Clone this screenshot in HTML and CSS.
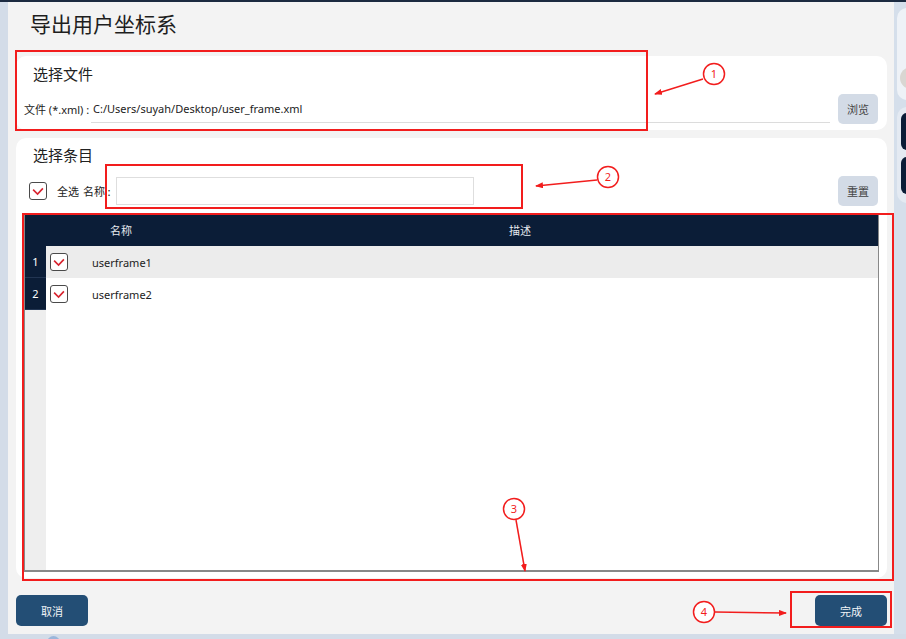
FILE: index.html
```html
<!DOCTYPE html>
<html lang="zh-CN">
<head>
  <meta charset="UTF-8" />
  <meta name="viewport" content="width=device-width, initial-scale=1.0" />
  <title>导出用户坐标系</title>
  <link rel="stylesheet" href="styles.css">
</head>
<body>
  <div class="topline"></div>
  <div class="screen">
    <div class="side-left"></div>

    <main class="dialog">
      <h1 class="title">导出用户坐标系</h1>

      <section class="card card-file">
        <h2 class="card-title">选择文件</h2>
        <div class="file-row">
          <span class="field-label">文件 (*.xml) :</span>
          <div class="path-field">C:/Users/suyah/Desktop/user_frame.xml</div>
          <button class="btn-light">浏览</button>
        </div>
      </section>

      <section class="card card-items">
        <h2 class="card-title">选择条目</h2>
        <div class="filter-row">
          <span class="check check-all">
            <svg viewBox="0 0 18 18"><path d="M3.5 7.5 L8.5 12.5 L14.5 6" /></svg>
          </span>
          <span class="filter-text select-all">全选</span>
          <span class="filter-text">名称 :</span>
          <input class="name-input" type="text">
          <span class="spacer"></span>
          <button class="btn-light">重置</button>
        </div>

        <div class="table">
          <div class="thead">
            <span></span>
            <span>名称</span>
            <span>描述</span>
            <span></span>
          </div>
          <div class="tbody">
            <div class="row row-alt">
              <span class="num">1</span>
              <div class="cell">
                <span class="check">
                  <svg viewBox="0 0 18 18"><path d="M3.5 7.5 L8.5 12.5 L14.5 6" /></svg>
                </span>
                <span class="item-name">userframe1</span>
              </div>
            </div>
            <div class="row">
              <span class="num">2</span>
              <div class="cell">
                <span class="check">
                  <svg viewBox="0 0 18 18"><path d="M3.5 7.5 L8.5 12.5 L14.5 6" /></svg>
                </span>
                <span class="item-name">userframe2</span>
              </div>
            </div>
            <div class="filler">
              <span class="num-empty"></span>
              <span></span>
            </div>
          </div>
        </div>
      </section>

      <footer class="actions">
        <button class="btn-dark">取消</button>
        <button class="btn-dark">完成</button>
      </footer>
    </main>

    <aside class="side-right">
      <div class="peek-card">
        <span class="peek-dot"></span>
      </div>
      <div class="peek-card peek-card-2">
        <span class="peek-block"></span>
        <span class="peek-block"></span>
      </div>
    </aside>
  </div>
  <div class="bottom-strip"><span class="bottom-dot"></span></div>

  <!-- annotation marks drawn over the screenshot -->
  <svg class="marks" width="906" height="639" viewBox="0 0 906 639">
    <defs>
      <marker id="head" markerWidth="8" markerHeight="6" refX="7" refY="3" orient="auto" markerUnits="userSpaceOnUse">
        <path d="M0 0 L8 3 L0 6 Z" fill="#f21d1d" />
      </marker>
    </defs>
    <g fill="none" stroke="#f21d1d" stroke-width="2">
      <rect x="16" y="51" width="631" height="79" />
      <rect x="106" y="165" width="416" height="43" />
      <rect x="23" y="214" width="870" height="366" />
      <rect x="791" y="592" width="100" height="35" />
    </g>
    <g fill="#fff" stroke="#f21d1d" stroke-width="1.5">
      <circle cx="714" cy="74" r="10.5" />
      <circle cx="608" cy="177" r="10.5" />
      <circle cx="514" cy="509" r="10.5" />
      <circle cx="704" cy="612" r="10.5" />
    </g>
    <g stroke="#f21d1d" stroke-width="1.5" marker-end="url(#head)">
      <line x1="703" y1="79" x2="655" y2="94" />
      <line x1="597" y1="180" x2="536" y2="186" />
      <line x1="516" y1="520" x2="525" y2="571" />
      <line x1="715" y1="612" x2="786" y2="613" />
    </g>
    <g class="mark-num" fill="#f21d1d" text-anchor="middle">
      <text x="714" y="78">1</text>
      <text x="608" y="181">2</text>
      <text x="514" y="513">3</text>
      <text x="704" y="616">4</text>
    </g>
  </svg>
</body>
</html>
```

FILE: styles.css
```css
* {
  box-sizing: border-box;
}
body {
  margin: 0;
  width: 906px;
  height: 639px;
  overflow: hidden;
  position: relative;
  background: #d5dfeb;
  font-family: "Noto Sans", "Noto Sans CJK SC", sans-serif;
  color: #222;
}
.topline {
  height: 2px;
  background: #1b2a40;
}
.screen {
  display: flex;
  height: 632px;
}
.side-left {
  width: 8px;
  background: #d3dce8;
}
.dialog {
  width: 886px;
  background: #f3f3f3;
  padding: 0 7px 0 8px;
  display: flex;
  flex-direction: column;
}
.title {
  margin: 0;
  padding-top: 8px;
  padding-left: 14px;
  font-size: 21px;
  line-height: 28px;
  font-weight: normal;
  color: #1e1e1e;
  height: 54px;
}
.card {
  background: #fff;
  border-radius: 10px;
  padding: 0 9px 6px 8px;
}
.card-title {
  margin: 7px 0 0 9px;
  font-size: 15px;
  line-height: 22px;
  font-weight: normal;
  color: #222;
}
.card-file {
  height: 74px;
}
.file-row {
  display: flex;
  align-items: flex-end;
  margin-top: 9px;
  height: 30px;
}
.field-label {
  flex: 0 0 67px;
  white-space: nowrap;
  font-size: 11px;
  line-height: 26px;
  margin-bottom: 1px;
  color: #222;
}
.path-field {
  flex: 1;
  height: 27px;
  line-height: 26px;
  margin-bottom: 1px;
  padding-left: 2px;
  font-size: 11px;
  color: #222;
  border-bottom: 1px solid #dcdcdc;
}
.btn-light {
  width: 40px;
  height: 30px;
  margin-left: 8px;
  border: none;
  border-radius: 5px;
  background: #d3dbe6;
  color: #444;
  font-family: "Noto Sans CJK SC", sans-serif;
  font-size: 11px;
  padding: 0;
}
.card-items {
  margin-top: 8px;
  height: 440px;
}
.card-items .card-title {
  margin-top: 6px;
}
.filter-row {
  display: flex;
  align-items: center;
  margin-top: 10px;
  height: 30px;
}
.check {
  width: 18px;
  height: 18px;
  border: 1.5px solid #4a4a4a;
  border-radius: 3px;
  background: #fff;
  display: flex;
}
.check svg {
  width: 100%;
  height: 100%;
  fill: none;
  stroke: #d8242f;
  stroke-width: 1.8;
}
.check-all {
  margin-left: 5px;
}
.filter-text {
  font-family: "Noto Sans CJK SC", sans-serif;
  font-size: 11px;
  color: #222;
  white-space: pre;
}
.select-all {
  margin: 0 4px 0 10px;
}
.name-input {
  width: 358px;
  height: 28px;
  border: 1px solid #dedede;
  background: #fff;
  margin: 0 0 0 5px;
  flex-shrink: 0;
}
.spacer {
  flex: 1;
}
.table {
  margin-top: 7px;
  margin-right: -1px;
  height: 359px;
  border: 1px solid #888;
  border-bottom-width: 2px;
  display: flex;
  flex-direction: column;
}
.thead {
  display: grid;
  grid-template-columns: 21px 150px 648px 1fr;
  height: 32px;
  background: #0b1d37;
  color: #e6e9ee;
  font-family: "Noto Sans CJK SC", sans-serif;
  font-size: 11px;
  line-height: 32px;
  text-align: center;
}
.tbody {
  flex: 1;
  display: flex;
  flex-direction: column;
}
.row {
  display: grid;
  grid-template-columns: 21px 1fr;
  height: 32px;
  background: #fff;
}
.row-alt {
  background: #ececec;
}
.num {
  background: #0b1d37;
  color: #fff;
  font-size: 11px;
  line-height: 31px;
  text-align: center;
  border-bottom: 1px solid #223552;
}
.cell {
  display: flex;
  align-items: center;
  padding-left: 4px;
}
.item-name {
  margin-left: 24px;
  font-size: 11px;
  color: #222;
}
.filler {
  flex: 1;
  display: grid;
  grid-template-columns: 21px 1fr;
}
.num-empty {
  background: #eeeeee;
}
.actions {
  display: flex;
  justify-content: space-between;
  margin-top: 17px;
}
.btn-dark {
  width: 72px;
  height: 31px;
  border: none;
  border-radius: 5px;
  background: #234e75;
  color: #f2f4f7;
  font-family: "Noto Sans CJK SC", sans-serif;
  font-size: 11px;
  padding: 0;
}
.side-right {
  width: 12px;
  overflow: hidden;
  padding: 6px 0 0 3px;
  background: #d5dfeb;
}
.peek-card {
  width: 30px;
  height: 92px;
  border-radius: 10px;
  background: #eef2f7;
  padding: 59px 0 0 3px;
}
.peek-dot {
  display: block;
  width: 22px;
  height: 22px;
  border-radius: 50%;
  background: #d9d6d2;
}
.peek-card-2 {
  margin-top: 7px;
  height: 96px;
  background: #e4eaf2;
  padding: 6px 0 0 4px;
  display: flex;
  flex-direction: column;
  gap: 7px;
}
.peek-block {
  width: 30px;
  height: 37px;
  border-radius: 6px;
  background: #0b1d37;
}
.bottom-strip {
  height: 5px;
  background: #d3dce8;
  padding-left: 47px;
  overflow: hidden;
}
.bottom-dot {
  display: block;
  width: 13px;
  height: 13px;
  margin-top: 2px;
  border-radius: 50%;
  background: #9ab6da;
}
.marks {
  position: absolute;
  left: 0;
  top: 0;
  pointer-events: none;
}
.mark-num {
  font-family: "Noto Sans", sans-serif;
  font-size: 11px;
}
```
